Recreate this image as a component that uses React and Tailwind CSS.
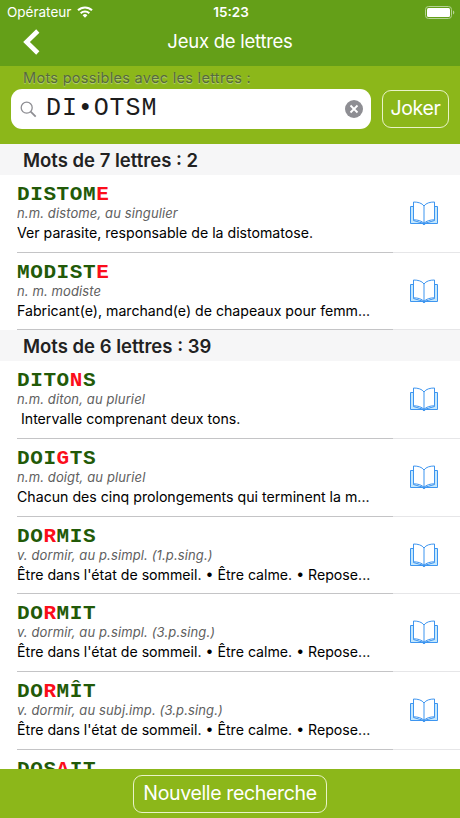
import React from 'react';

const sections = [
    {
        title: 'Mots de 7 lettres : 2',
        words: [
            { word: 'DISTOME', joker: 6, nature: 'n.m. distome, au singulier', definition: 'Ver parasite, responsable de la distomatose.' },
            { word: 'MODISTE', joker: 6, nature: 'n. m. modiste', definition: 'Fabricant(e), marchand(e) de chapeaux pour femm...' },
        ],
    },
    {
        title: 'Mots de 6 lettres : 39',
        words: [
            { word: 'DITONS', joker: 4, nature: 'n.m. diton, au pluriel', definition: '\u00a0Intervalle comprenant deux tons.' },
            { word: 'DOIGTS', joker: 3, nature: 'n.m. doigt, au pluriel', definition: 'Chacun des cinq prolongements qui terminent la m...' },
            { word: 'DORMIS', joker: 2, nature: 'v. dormir, au p.simpl. (1.p.sing.)', definition: "Être dans l'état de sommeil. • Être calme. • Repose..." },
            { word: 'DORMIT', joker: 2, nature: 'v. dormir, au p.simpl. (3.p.sing.)', definition: "Être dans l'état de sommeil. • Être calme. • Repose..." },
            { word: 'DORMÎT', joker: 2, nature: 'v. dormir, au subj.imp. (3.p.sing.)', definition: "Être dans l'état de sommeil. • Être calme. • Repose..." },
            { word: 'DOSAIT', joker: 3, nature: '', definition: '' },
        ],
    },
];

const BookIcon = () => (
    <svg width="28" height="25" viewBox="0 0 28 25" fill="none" stroke="#3d95f0" strokeWidth="1">
        <path d="M3.5 5.5h-3v17h12.7l.8.8.8-.8h12.700v-17h-3V19.500L14 22.500 3.500 19.500Z" fill="#c5e8fd" />
        <path d="M14 5C12 2 8 1 3.500 1V18.800C8 18.800 12 20 14 22.500 16 20 20 18.800 24.500 18.800V1C20 1 16 2 14 5Z" fill="#fff" />
        <path d="M14 5V22.500" />
        <circle cx="14" cy="22.700" r="1" fill="#3d95f0" />
    </svg>
);

const StatusBar = () => (
    <div className="grid h-6 grid-cols-3 items-center pl-[7px] pr-[5px] text-[13.5px] leading-6 text-white">
        <div className="flex items-center gap-[6px]">
            <span>Opérateur</span>
            <svg width="16" height="12" viewBox="0 0 16 12" fill="none" stroke="#fff" strokeWidth="2">
                <path d="M1 4.300a10 10 0 0 1 14 0" />
                <path d="M3.700 7.200a6.100 6.100 0 0 1 8.600 0" />
                <path d="M8 11.700 5.600 9.300a3.400 3.400 0 0 1 4.800 0Z" fill="#fff" stroke="none" />
            </svg>
        </div>
        <span className="text-center font-semibold">15:23</span>
        <svg className="justify-self-end" width="30" height="13" viewBox="0 0 30 13">
            <rect x="0.500" y="0.500" width="26" height="12" rx="3" fill="none" stroke="#b5d394" />
            <rect x="2" y="2" width="23" height="9" rx="1.500" fill="#fff" />
            <path d="M28 4.500c1.800.6 1.800 3.400 0 4Z" fill="#b5d394" />
        </svg>
    </div>
);

const WordRow = ({ item }) => (
    <div className="flex h-[77.7px] shrink-0 pl-[17px]">
        <div className="w-[376px] shrink-0 overflow-hidden whitespace-nowrap border-b border-[#c4c4c6] pt-[8px]">
            <div className="h-[22px] font-['Liberation_Mono',monospace] text-[21px] font-bold leading-6 tracking-[0.6px] text-[#225a08]">
                {item.word.slice(0, item.joker)}
                <span className="text-[#fb0d1b]">{item.word[item.joker]}</span>
                {item.word.slice(item.joker + 1)}
            </div>
            <div className="text-[13px] italic leading-4 tracking-[0.12px] text-[#606060]">{item.nature}</div>
            <div className="mt-[2px] text-[14.15px] leading-5 text-black">{item.definition}</div>
        </div>
        <div className="flex flex-1 justify-center border-b border-[#e6e6e8] pr-[6px] pt-[26px]">
            <BookIcon />
        </div>
    </div>
);

const App = () => {
    return (
        <div className="flex h-[818px] w-[460px] flex-col overflow-hidden bg-white font-['Inter',sans-serif]">
            <header className="h-[66px] shrink-0 bg-[#649f18]">
                <StatusBar />
                <div className="grid h-[36px] grid-cols-[1fr_auto_1fr] items-center">
                    <svg className="ml-[23px]" width="17" height="26" viewBox="0 0 17 26" fill="none" stroke="#fff" strokeWidth="4.600">
                        <path d="M14.800 2 3.500 13l11.300 11" />
                    </svg>
                    <h1 className="text-[18.5px] tracking-[-0.25px] text-white">Jeux de lettres</h1>
                </div>
            </header>

            <div className="h-[77.500px] shrink-0 bg-[#8cb71a] pl-[11px] pr-[11px]">
                <div className="h-[23px] pl-[12px] text-[14.5px] leading-[23px] tracking-[0.300px] text-[#566a3c] [text-shadow:0_1px_1px_#b9d184]">
                    Mots possibles avec les lettres :
                </div>
                <div className="flex items-center justify-between">
                    <div className="flex h-10 w-[360px] items-center rounded-[11px] bg-white pl-[9px] pr-[8px]">
                        <svg width="17" height="17" viewBox="0 0 17 17" fill="none" stroke="#8e8e93" strokeWidth="1.300">
                            <circle cx="6.700" cy="6.700" r="5.500" />
                            <path d="m10.700 10.700 5 5" strokeWidth="1.800" />
                        </svg>
                        <span className="ml-[9px] flex-1 font-['Liberation_Mono',monospace] text-[25px] leading-10 tracking-[0.900px] text-[#1c1c1c]">DI•OTSM</span>
                        <svg width="18" height="18" viewBox="0 0 18 18">
                            <circle cx="9" cy="9" r="9" fill="#8e8e93" />
                            <path d="m5.500 5.500 7 7m0-7-7 7" stroke="#fff" strokeWidth="1.800" />
                        </svg>
                    </div>
                    <button className="h-[38px] w-[67px] rounded-[9px] border border-[#e9f3c8] text-[19.500px] tracking-[-0.350px] text-white">Joker</button>
                </div>
            </div>

            <main className="flex min-h-0 flex-1 flex-col overflow-hidden pt-[0.500px]">
                {sections.map((section) => (
                    <section key={section.title} className="shrink-0">
                        <h2 className="h-[31px] bg-[#f6f6f7] pl-[23px] text-[18.500px] font-semibold leading-[32px] text-[#222]">
                            {section.title}
                        </h2>
                        {section.words.map((item) => (
                            <WordRow key={item.word} item={item} />
                        ))}
                    </section>
                ))}
            </main>

            <footer className="flex h-[49.500px] shrink-0 justify-center bg-[#8cb71a] pt-[6px]">
                <button className="h-[38px] w-[194px] rounded-[9px] border border-[#e9f3c8] text-[19.500px] tracking-[-0.350px] text-white">
                    Nouvelle recherche
                </button>
            </footer>
        </div>
    );
};

export default App;
